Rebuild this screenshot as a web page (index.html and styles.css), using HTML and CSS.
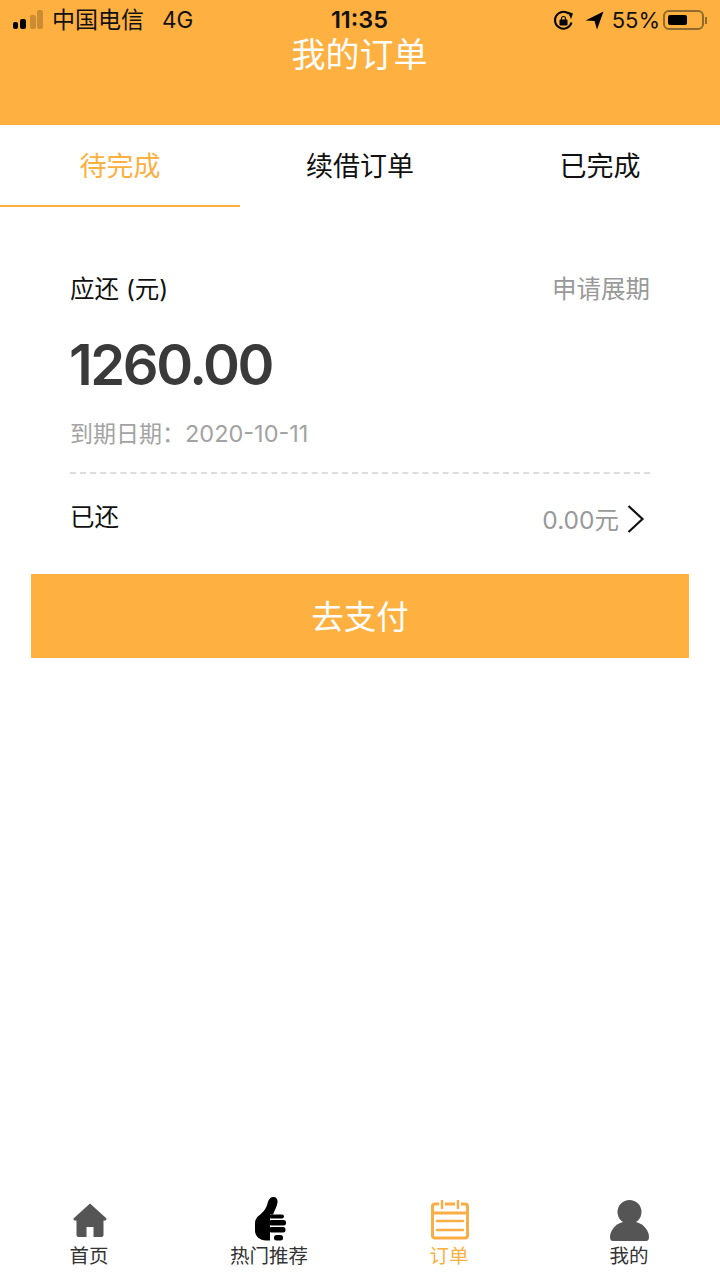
FILE: index.html
```html
<!DOCTYPE html>
<html lang="zh-CN">
<head>
	<meta charset="UTF-8">
	<title>我的订单</title>
	<link rel="stylesheet" href="styles.css">
</head>
<body>
	<section class="page">

		<header class="header">
			<div class="status">
				<div class="status-left">
					<svg class="signal" width="32" height="20" viewBox="0 0 32 20">
						<rect x="1" y="12" width="5" height="7" rx="2" fill="#000"/>
						<rect x="8" y="9" width="6" height="10" rx="2" fill="#000"/>
						<rect x="18" y="5" width="6" height="14" rx="2" fill="#000" opacity=".2"/>
						<rect x="25" y="0" width="6" height="19" rx="2" fill="#000" opacity=".2"/>
					</svg>
					<span class="carrier">中国电信</span>
					<span class="network">4G</span>
				</div>
				<div class="time">11:35</div>
				<div class="status-right">
					<svg width="21" height="21" viewBox="0 0 21 21">
						<path d="M18.500 12.500A8.400 8.400 0 1 1 15.800 3.800" fill="none" stroke="#000" stroke-width="2"/>
						<path d="M14.500 1.500l5.500 2-2 5.500z" fill="#000"/>
						<rect x="6.500" y="9.500" width="8" height="6" rx="1" fill="#000"/>
						<path d="M8.500 10V8.500a2 2 0 0 1 4 0V10" fill="none" stroke="#000" stroke-width="1.200"/>
					</svg>
					<svg class="arrow" width="19" height="19" viewBox="0 0 19 19">
						<path d="M0.500 9.500L18.500 0.500L12 18.500L9.500 10z" fill="#000"/>
					</svg>
					<span class="percent">55%</span>
					<div class="battery"><div class="battery-level"></div></div>
					<div class="battery-nub"></div>
				</div>
			</div>
			<h1 class="title">我的订单</h1>
		</header>

		<nav class="tabs">
			<a class="tab active">待完成</a>
			<a class="tab">续借订单</a>
			<a class="tab">已完成</a>
		</nav>

		<div class="order">
			<div class="row">
				<span class="label">应还 (元)</span>
				<span class="muted">申请展期</span>
			</div>
			<p class="amount">1260.00</p>
			<p class="due">到期日期：<span class="due-date">2020-10-11</span></p>
			<div class="row paid">
				<span class="label">已还</span>
				<span class="paid-value">
					<span class="muted">0.00元</span>
					<svg width="18" height="30" viewBox="0 0 18 30">
						<path d="M1.500 2l14 13-14 13" fill="none" stroke="#111" stroke-width="2.200"/>
					</svg>
				</span>
			</div>
		</div>

		<button class="pay">去支付</button>

		<footer class="tabbar">
			<a class="nav-item">
				<span class="nav-icon">
					<svg width="34" height="34" viewBox="0 0 34 34">
						<path d="M17 0.500L33 15c1 1 .5 2.500-1 2.500h-1.500V32a2 2 0 0 1-2 2H20.500V24h-7v10H5.500a2 2 0 0 1-2-2V17.500H2c-1.500 0-2-1.500-1-2.500z" fill="#555"/>
					</svg>
				</span>
				<span class="nav-label">首页</span>
			</a>
			<a class="nav-item">
				<span class="nav-icon">
					<svg width="32" height="46" viewBox="0 0 32 46">
						<path d="M19 0c3 0 5 2 4.500 5.500-.5 4-3 8-4.500 12h-3v26h-4C6 43.500 1 39 1 34v-8c0-3 1.500-5.500 4-7.500 4.500-3.500 7-6.500 8.500-12C14.500 3 16 0 19 0z" fill="#000"/>
						<rect x="15" y="17.500" width="15" height="4" rx="2" fill="#000"/>
						<rect x="15" y="23" width="17" height="5.500" rx="2.500" fill="#000"/>
						<rect x="15" y="30" width="16.500" height="5.500" rx="2.500" fill="#000"/>
						<rect x="20" y="38" width="9" height="5.500" rx="2.500" fill="#000"/>
					</svg>
				</span>
				<span class="nav-label">热门推荐</span>
			</a>
			<a class="nav-item current">
				<span class="nav-icon">
					<svg width="38" height="40" viewBox="0 0 38 40">
						<path d="M8 4H4a2.500 2.500 0 0 0-2.500 2.500v29A2.500 2.500 0 0 0 4 38h30a2.500 2.500 0 0 0 2.500-2.500v-29A2.500 2.500 0 0 0 34 4h-4M14 4h10M1.500 13h35" fill="none" stroke="#f8ad45" stroke-width="3"/>
						<path d="M11 1v7M27 1v7M6 21h26M6 30h26" fill="none" stroke="#f8ad45" stroke-width="2.500" stroke-linecap="round"/>
					</svg>
				</span>
				<span class="nav-label">订单</span>
			</a>
			<a class="nav-item">
				<span class="nav-icon">
					<svg width="42" height="41" viewBox="0 0 42 41">
						<ellipse cx="20.500" cy="12" rx="12" ry="12" fill="#555"/>
						<path d="M14 22C6 24 1 31 1 37c0 2.500 1 4 3 4h33c2 0 3-1.500 3-4 0-6-5-13-13-15z" fill="#555"/>
					</svg>
				</span>
				<span class="nav-label">我的</span>
			</a>
		</footer>

	</section>
</body>
</html>
```

FILE: styles.css
```css
* {
	box-sizing: border-box;
	margin: 0;
}

body {
	font-family: Inter, "Noto Sans CJK SC", sans-serif;
	background-color: #fff;
}

.page {
	display: flex;
	flex-direction: column;
	height: 1280px;
}

.header {
	height: 125px;
	background-color: #feb040;
	padding: 4px 13px 0 12px;
}

.status {
	display: grid;
	grid-template-columns: 1fr auto 1fr;
	align-items: center;
	height: 32px;
	font-size: 23px;
	line-height: 26px;
	color: #111;
}

.status-left, .status-right {
	display: flex;
	align-items: center;
}

.status-right {
	justify-content: flex-end;
}

.signal {
	margin-right: 8px;
}

.carrier {
	margin-right: 18px;
}

.network {
	font-size: 22.500px;
}

.time {
	font-size: 23.500px;
	font-weight: 600;
}

.arrow {
	margin-left: 11px;
}

.percent {
	margin-left: 8px;
	font-size: 22px;
}

.battery {
	width: 41px;
	height: 20px;
	margin-left: 3px;
	padding: 3px;
	border: 2px solid #8f6a2c;
	border-radius: 6px;
}

.battery-level {
	width: 19px;
	height: 10px;
	background-color: #000;
	border-radius: 2px;
}

.battery-nub {
	width: 2px;
	height: 7px;
	margin-left: 1px;
	background-color: #8f6a2c;
}

.title {
	margin-top: 0;
	font-size: 34px;
	font-weight: 400;
	line-height: 38px;
	text-align: center;
	color: #fff;
}

.tabs {
	display: flex;
	height: 82px;
}

.tab {
	flex: 1;
	font-size: 27px;
	line-height: 84px;
	text-align: center;
	color: #111;
}

.tab.active {
	color: #fbb040;
	border-bottom: 2px solid #fbb040;
}

.order {
	padding: 63px 70px 0;
}

.row {
	display: flex;
	justify-content: space-between;
	align-items: center;
}

.label {
	font-size: 24.500px;
	color: #111;
}

.muted {
	font-size: 24.500px;
	color: #999;
}

.amount {
	margin-top: 25px;
	margin-left: -1px;
	font-size: 56px;
	font-weight: 600;
	letter-spacing: -2.400px;
	line-height: 70px;
	color: #3a3a3a;
}

.due {
	margin-top: 17px;
	font-size: 23px;
	line-height: 34px;
	color: #a3a3a3;
}

.due-date {
	font-size: 23.500px;
}

.paid {
	margin-top: 21px;
	padding-top: 21px;
	border-top: 2px dashed #ddd;
}

.paid-value {
	display: flex;
	align-items: center;
	gap: 8px;
	margin-top: 6px;
	padding-right: 5px;
}

.pay {
	margin: 38px 31px 0;
	height: 84px;
	padding-bottom: 4px;
	border: 0;
	background-color: #feb040;
	font-family: inherit;
	font-size: 32.500px;
	color: #fff;
}

.tabbar {
	display: grid;
	grid-template-columns: repeat(4, 1fr);
	margin-top: auto;
	height: 83px;
}

.nav-item {
	display: flex;
	flex-direction: column;
	align-items: center;
	font-size: 19.500px;
	line-height: 26px;
	color: #333;
}

.nav-item.current {
	color: #fbb040;
}

.nav-icon {
	display: flex;
	align-items: center;
	height: 46px;
}

.nav-label {
	padding-right: 2px;
}
```
